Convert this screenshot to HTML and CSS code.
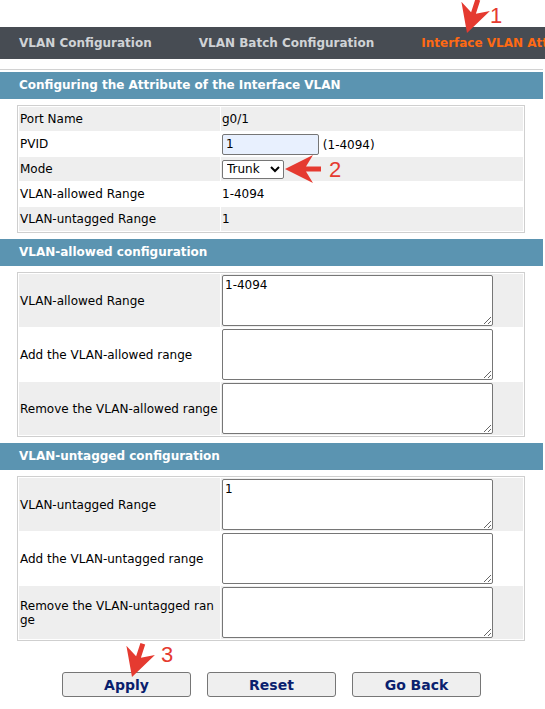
FILE: index.html
```html
<!DOCTYPE html>
<html lang="en">
<head>
    <meta charset="UTF-8">
    <title>Interface VLAN Attribute</title>
    <link rel="stylesheet" href="styles.css">
</head>
<body>
    <div class="tabs">
        <a class="tab">VLAN Configuration</a>
        <a class="tab">VLAN Batch Configuration</a>
        <a class="tab active">Interface VLAN Attribute</a>
    </div>

    <div class="content">
        <div class="title">Configuring the Attribute of the Interface VLAN</div>
        <table class="grid">
            <tr class="odd"><td class="label">Port Name</td><td>g0/1</td></tr>
            <tr><td class="label">PVID</td><td><input type="text" class="pvid" value="1"> (1-4094)</td></tr>
            <tr class="odd"><td class="label">Mode</td><td>
                <select class="mode">
                    <option>Access</option>
                    <option selected>Trunk</option>
                    <option>Hybrid</option>
                </select>
            </td></tr>
            <tr><td class="label">VLAN-allowed Range</td><td>1-4094</td></tr>
            <tr class="odd"><td class="label">VLAN-untagged Range</td><td>1</td></tr>
        </table>

        <div class="title">VLAN-allowed configuration</div>
        <table class="grid tall">
            <tr class="odd"><td class="label">VLAN-allowed Range</td><td><textarea>1-4094</textarea></td></tr>
            <tr><td class="label">Add the VLAN-allowed range</td><td><textarea></textarea></td></tr>
            <tr class="odd"><td class="label">Remove the VLAN-allowed range</td><td><textarea></textarea></td></tr>
        </table>

        <div class="title">VLAN-untagged configuration</div>
        <table class="grid tall">
            <tr class="odd"><td class="label">VLAN-untagged Range</td><td><textarea>1</textarea></td></tr>
            <tr><td class="label">Add the VLAN-untagged range</td><td><textarea></textarea></td></tr>
            <tr class="odd"><td class="label">Remove the VLAN-untagged range</td><td><textarea></textarea></td></tr>
        </table>

        <div class="actions">
            <button>Apply</button>
            <button>Reset</button>
            <button>Go Back</button>
        </div>
    </div>

    <!-- red step markers drawn over the page -->
    <svg class="marks" width="545" height="709" viewBox="0 0 545 709">
        <g fill="#e53a30">
            <path transform="translate(467 33) rotate(-72)" d="M0 0 L28 -15 L21 -2.5 L35 -2.5 L35 2.5 L21 2.5 L28 15 Z"/>
            <path transform="translate(285 169)" d="M0 0 L28 -14 L21 -2.5 L36 -2.5 L36 2.5 L21 2.5 L28 14 Z"/>
            <path transform="translate(132 677) rotate(-72)" d="M0 0 L28 -15 L21 -2.5 L35 -2.5 L35 2.5 L21 2.5 L28 15 Z"/>
        </g>
        <g fill="#e53a30" font-family="Liberation Sans, sans-serif" font-size="22">
            <text x="490" y="23">1</text>
            <text x="329" y="177">2</text>
            <text x="161" y="662">3</text>
        </g>
    </svg>
</body>
</html>
```

FILE: styles.css
```css
body {
    margin: 0;
    font-family: 'DejaVu Sans', Verdana, sans-serif;
    font-size: 12px;
    color: #000;
    background: #fff;
    position: relative;
    width: 545px;
    overflow: hidden;
}
.tabs {
    margin-top: 27px;
    height: 32px;
    background: #474c53;
    display: flex;
    align-items: center;
    white-space: nowrap;
    overflow: hidden;
    padding-left: 19px;
}
.tab {
    font-weight: bold;
    font-size: 12px;
    color: #d0d3d6;
    margin-right: 47px;
}
.tab.active {
    color: #ff6a13;
}
.content {
    margin-top: 10px;
    border-top: 1px solid #d2d2d2;
    padding-top: 2px;
    width: 543px;
}
.title {
    background: #5b94b1;
    color: #fff;
    font-weight: bold;
    font-size: 12px;
    height: 27px;
    line-height: 27px;
    padding-left: 19px;
}
.grid {
    margin: 6px 0 6px 17px;
    width: 508px;
    border: 1px solid #cfcfcf;
    border-spacing: 1px;
    background: #fff;
}
.grid td {
    padding: 0 0 0 1px;
    height: 24px;
    vertical-align: middle;
}
.grid tr.odd td {
    background: #eeeeee;
}
.grid td.label {
    width: 199px;
    padding: 0 1px;
    word-break: break-all;
}
.pvid {
    width: 89px;
    height: 19px;
    padding: 0 3px;
    border: 1px solid #767676;
    border-radius: 2px;
    background: #e8f0fe;
    font-family: inherit;
    font-size: 12px;
    margin: 0;
}
.mode {
    width: 62px;
    height: 19px;
    font-family: inherit;
    font-size: 12px;
    border: 1px solid #767676;
    border-radius: 2px;
    background: #fff;
}
.tall td {
    height: 53px;
}
textarea {
    display: block;
    width: 271px;
    height: 51px;
    box-sizing: border-box;
    border: 1px solid #767676;
    border-radius: 2px;
    padding: 2px;
    font-family: inherit;
    font-size: 12px;
    margin: 0;
}
.actions {
    display: flex;
    justify-content: center;
    gap: 16px;
    padding-top: 25px;
}
.actions button {
    width: 129px;
    height: 25px;
    background: #efefef;
    border: 1px solid #767676;
    border-radius: 3px;
    font-family: inherit;
    font-weight: bold;
    font-size: 14px;
    color: #0a1f6e;
}
.marks {
    position: absolute;
    left: 0;
    top: 0;
    pointer-events: none;
}
```
